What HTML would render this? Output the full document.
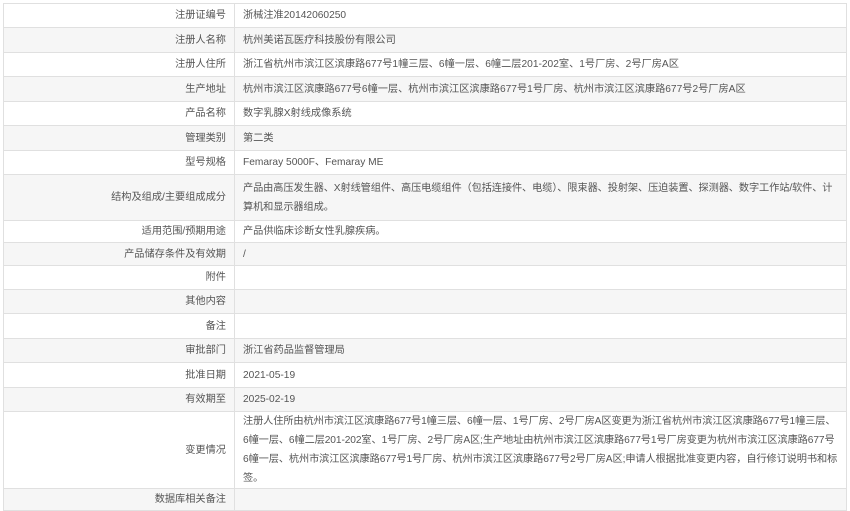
<!DOCTYPE html>
<html><head><meta charset="utf-8"><style>
body{margin:0;background:#fff;font-family:"Liberation Sans","Noto Sans CJK SC",sans-serif;font-size:10.2px;color:#555;overflow:hidden;}
table{position:absolute;left:3px;top:3px;width:844px;border-collapse:collapse;table-layout:fixed;}
td{border:1px solid #e0e0e0;padding:0 0 0 8px;line-height:19px;white-space:nowrap;overflow:hidden;}
td.l{width:214px;text-align:right;padding:0 8px;}
tr:nth-child(even){background:#f6f6f6;}
.t{letter-spacing:-0.1px;}
</style></head><body>
<table>
<colgroup><col style="width:231px"><col></colgroup>
<tr style="height:24px"><td class="l">注册证编号</td><td>浙械注准20142060250</td></tr>
<tr style="height:25px"><td class="l">注册人名称</td><td>杭州美诺瓦医疗科技股份有限公司</td></tr>
<tr style="height:24px"><td class="l">注册人住所</td><td>浙江省杭州市滨江区滨康路677号1幢三层、6幢一层、6幢二层201-202室、1号厂房、2号厂房A区</td></tr>
<tr style="height:25px"><td class="l">生产地址</td><td>杭州市滨江区滨康路677号6幢一层、杭州市滨江区滨康路677号1号厂房、杭州市滨江区滨康路677号2号厂房A区</td></tr>
<tr style="height:24px"><td class="l">产品名称</td><td>数字乳腺X射线成像系统</td></tr>
<tr style="height:25px"><td class="l">管理类别</td><td>第二类</td></tr>
<tr style="height:24px"><td class="l">型号规格</td><td>Femaray 5000F、Femaray ME</td></tr>
<tr style="height:46px"><td class="l">结构及组成/主要组成成分</td><td class="t">产品由高压发生器、X射线管组件、高压电缆组件（包括连接件、电缆）、限束器、投射架、压迫装置、探测器、数字工作站/软件、计<br>算机和显示器组成。</td></tr>
<tr style="height:22px"><td class="l">适用范围/预期用途</td><td>产品供临床诊断女性乳腺疾病。</td></tr>
<tr style="height:23px"><td class="l">产品储存条件及有效期</td><td>/</td></tr>
<tr style="height:24px"><td class="l">附件</td><td></td></tr>
<tr style="height:24px"><td class="l">其他内容</td><td></td></tr>
<tr style="height:25px"><td class="l">备注</td><td></td></tr>
<tr style="height:24px"><td class="l">审批部门</td><td>浙江省药品监督管理局</td></tr>
<tr style="height:25px"><td class="l">批准日期</td><td>2021-05-19</td></tr>
<tr style="height:24px"><td class="l">有效期至</td><td>2025-02-19</td></tr>
<tr style="height:76px"><td class="l">变更情况</td><td class="t">注册人住所由杭州市滨江区滨康路677号1幢三层、6幢一层、1号厂房、2号厂房A区变更为浙江省杭州市滨江区滨康路677号1幢三层、<br>6幢一层、6幢二层201-202室、1号厂房、2号厂房A区;生产地址由杭州市滨江区滨康路677号1号厂房变更为杭州市滨江区滨康路677号<br>6幢一层、杭州市滨江区滨康路677号1号厂房、杭州市滨江区滨康路677号2号厂房A区;申请人根据批准变更内容，自行修订说明书和标<br>签。</td></tr>
<tr style="height:22px"><td class="l">数据库相关备注</td><td></td></tr>
</table>
</body></html>
